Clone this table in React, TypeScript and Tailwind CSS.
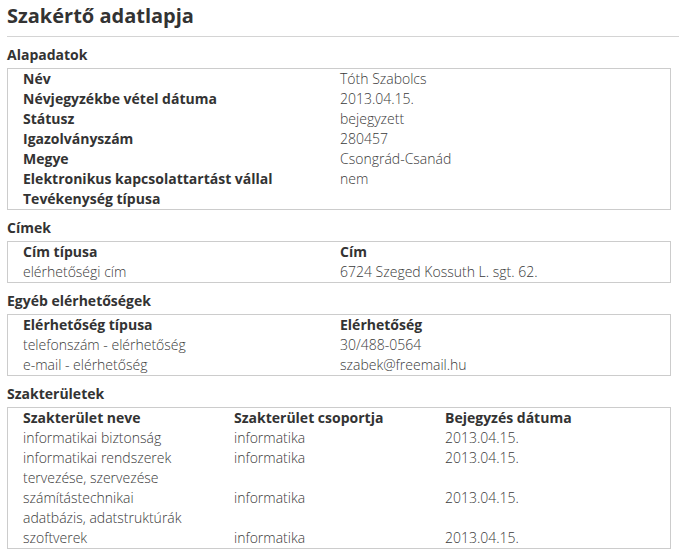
const BASIC = [
  ["Név", "Tóth Szabolcs"],
  ["Névjegyzékbe vétel dátuma", "2013.04.15."],
  ["Státusz", "bejegyzett"],
  ["Igazolványszám", "280457"],
  ["Megye", "Csongrád-Csanád"],
  ["Elektronikus kapcsolattartást vállal", "nem"],
  ["Tevékenység típusa", ""],
];

const ADDRESSES = [["elérhetőségi cím", "6724 Szeged Kossuth L. sgt. 62."]];

const CONTACTS = [
  ["telefonszám - elérhetőség", "30/488-0564"],
  ["e-mail - elérhetőség", "szabek@freemail.hu"],
];

const FIELDS = [
  ["informatikai biztonság", "informatika", "2013.04.15."],
  ["informatikai rendszerek tervezése, szervezése", "informatika", "2013.04.15."],
  ["számítástechnikai adatbázis, adatstruktúrák", "informatika", "2013.04.15."],
  ["szoftverek", "informatika", "2013.04.15."],
];

function Section({ title, children }: { title: string; children: React.ReactNode }) {
  return (
    <section className="mt-2 mr-[8px]">
      <h2 className="text-[14px] font-bold leading-[20px] mb-[3px]">{title}</h2>
      <div className="border border-[#cccccc] pl-[15px]">{children}</div>
    </section>
  );
}

function TwoCol({ head, rows, boldLabels }: { head?: [string, string]; rows: string[][]; boldLabels?: boolean }) {
  return (
    <div className="grid grid-cols-[317px_1fr] text-[14px] leading-[20px]">
      {head && (
        <>
          <div className="font-bold">{head[0]}</div>
          <div className="font-bold">{head[1]}</div>
        </>
      )}
      {rows.map(([a, b]) => (
        <div key={a} className="contents">
          <div className={boldLabels ? "font-bold" : "font-light text-[#3a3a3a]"}>{a}</div>
          <div className="font-light text-[#3a3a3a]">{b}</div>
        </div>
      ))}
    </div>
  );
}

export default function App() {
  return (
    <div className="min-h-screen bg-white pl-[7px] pt-[2px] text-[#333] font-['Open_Sans',sans-serif]">
      <h1 className="text-[20px] font-bold leading-[28px] pb-[6px] border-b border-[#d4d4d4]">
        Szakértő adatlapja
      </h1>

      <Section title="Alapadatok">
        <TwoCol rows={BASIC} boldLabels />
      </Section>

      <Section title="Címek">
        <TwoCol head={["Cím típusa", "Cím"]} rows={ADDRESSES} />
      </Section>

      <Section title="Egyéb elérhetőségek">
        <TwoCol head={["Elérhetőség típusa", "Elérhetőség"]} rows={CONTACTS} />
      </Section>

      <Section title="Szakterületek">
        <div className="grid grid-cols-[211px_211px_1fr] text-[14px] leading-[20px]">
          <div className="font-bold">Szakterület neve</div>
          <div className="font-bold">Szakterület csoportja</div>
          <div className="font-bold">Bejegyzés dátuma</div>
          {FIELDS.map(([name, group, date]) => (
            <div key={name} className="contents">
              <div className="font-light text-[#3a3a3a] pr-[36px]">{name}</div>
              <div className="font-light text-[#3a3a3a]">{group}</div>
              <div className="font-light text-[#3a3a3a]">{date}</div>
            </div>
          ))}
        </div>
      </Section>
    </div>
  );
}
